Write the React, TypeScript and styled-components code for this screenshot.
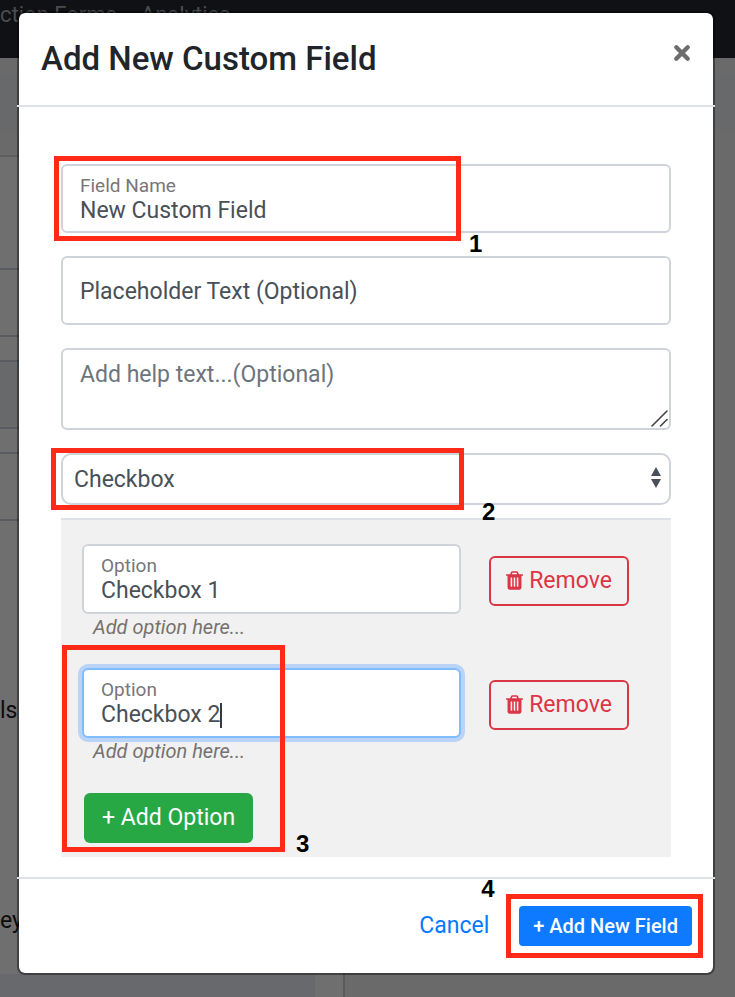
import React, { useState } from "react";
import styled, { createGlobalStyle, css } from "styled-components";

const GlobalStyle = createGlobalStyle`
  *, *::before, *::after { box-sizing: border-box; }
  body {
    margin: 0;
    background: #6a6a6a;
    color: #212529;
    font-family: Roboto, "Liberation Sans", sans-serif;
  }
  button, input, select, textarea { font: inherit; }
`;

/* ---------- page behind the dialog ---------- */

const Screen = styled.div`
  position: relative;
  min-height: 100vh;
  overflow: hidden;
`;

const Backdrop = styled.div`
  position: absolute;
  inset: 0;
  display: flex;
  flex-direction: column;
  overflow: hidden;
`;

const NavBar = styled.nav`
  flex: none;
  display: flex;
  gap: 24px;
  height: 58px;
  padding-top: 2px;
  background: #101115;
  color: #4b4c4f;
  font-size: 22px;
  line-height: 26px;
  white-space: nowrap;
`;

const SubBar = styled.div`
  flex: none;
  height: 56px;
  margin: 17px 0 24px;
  background: #67696b;
`;

const Columns = styled.div`
  flex: 1;
  display: flex;
`;

const Column = styled.div`
  width: 345px;
  display: flex;
  flex-direction: column;
  border-top: 2px solid #5f5f60;
  border-right: 2px solid #5a5a5a;
  background: #6f6f6f;
  color: #0c0c0d;
  font-size: 23px;
  line-height: 30px;
`;

const Band = styled.div<{ $height: number; $shade?: boolean }>`
  flex: none;
  height: ${(p) => p.$height}px;
  border-bottom: 2px solid #585c60;
  background: ${(p) => (p.$shade ? "#67696b" : "transparent")};
`;

const PageText = styled.p<{ $top: number }>`
  margin: ${(p) => p.$top}px 0 0;
`;

const BottomBand = styled.div`
  flex: 1;
  margin: 38px 28px 0 0;
  background: #68696c;
`;

/* ---------- dialog ---------- */

const Dialog = styled.div`
  position: relative;
  margin: 11px 20px 22px 17px;
  border: 2px solid rgba(0, 0, 0, 0.4);
  border-radius: 8px;
  background: #fff;
  background-clip: padding-box;
`;

const Header = styled.header`
  display: flex;
  justify-content: space-between;
  align-items: flex-start;
  margin: 0 -2px;
  padding: 24px 24px 24px;
  border-bottom: 2px solid #dee2e6;
`;

const Title = styled.h1`
  margin: 0;
  font-size: 33px;
  line-height: 44px;
  font-weight: 500;
`;

const CloseButton = styled.button`
  display: flex;
  margin: 7px 0 0;
  padding: 0;
  border: 0;
  background: none;
  color: #6d6d6d;
`;

const Body = styled.div`
  display: flex;
  flex-direction: column;
  gap: 23px;
  padding: 57px 42px 20px;
`;

const Anchor = styled.div`
  position: relative;
  min-width: 0;
`;

const FieldBox = styled.div<{ $focus?: boolean; $tall?: boolean; $single?: boolean }>`
  display: flex;
  flex-direction: column;
  justify-content: center;
  height: ${(p) => (p.$tall ? 70 : 69)}px;
  padding: ${(p) => (p.$single ? 3 : 0)}px 17px 0;
  border: 2px solid #ced4da;
  border-radius: 6px;
  background: #fff;
  ${(p) =>
    p.$focus &&
    css`
      border-color: #80bdff;
      box-shadow: 0 0 0 4px #b9d4f6;
    `}
`;

const FieldLabel = styled.label`
  color: #777;
  font-size: 19px;
  line-height: 24px;
`;

const InputLine = styled.div`
  display: flex;
  align-items: center;
`;

const TextInput = styled.input<{ $fit?: boolean }>`
  width: 100%;
  padding: 0;
  border: 0;
  outline: 0;
  background: none;
  color: #495057;
  font-size: 23px;
  line-height: 26px;
  height: 26px;
  ${(p) =>
    p.$fit &&
    css`
      width: auto;
      field-sizing: content;
    `}
  &::placeholder {
    color: #495057;
    opacity: 1;
  }
`;

const Caret = styled.span`
  width: 2px;
  height: 25px;
  background: #343a40;
`;

const HelpText = styled.textarea`
  display: block;
  width: 100%;
  height: 82px;
  padding: 10px 17px;
  border: 2px solid #ced4da;
  border-radius: 6px;
  outline: 0;
  resize: none;
  color: #495057;
  font-size: 23px;
  line-height: 30px;
  &::placeholder {
    color: #6c757d;
    opacity: 1;
  }
`;

const Grip = styled.svg`
  position: absolute;
  right: 3px;
  bottom: 3px;
`;

const TypeSelect = styled.select`
  display: block;
  width: 100%;
  height: 52px;
  padding: 0 40px 0 11px;
  appearance: none;
  border: 2px solid #ced4da;
  border-radius: 10px;
  outline: 0;
  background: #fff;
  color: #495057;
  font-size: 23px;
`;

const SelectArrows = styled.svg`
  position: absolute;
  right: 10px;
  top: 14px;
  pointer-events: none;
`;

const OptionsPanel = styled.section`
  margin-top: -10px;
  padding: 24px 42px 14px 21px;
  border-top: 2px solid #dee2e6;
  background: #f1f1f1;
`;

const OptionRow = styled.div`
  display: flex;
  align-items: flex-start;
  gap: 28px;
  height: 124px;
`;

const OptionField = styled.div`
  flex: 1;
  min-width: 0;
`;

const Hint = styled.p`
  margin: 0 0 0 11px;
  color: #76716f;
  font-size: 20px;
  line-height: 26px;
  font-style: italic;
`;

const RemoveButton = styled.button`
  flex: none;
  display: flex;
  align-items: center;
  justify-content: center;
  gap: 6px;
  width: 140px;
  height: 50px;
  margin-top: 12px;
  padding: 0 0 2px;
  border: 2px solid #dc3545;
  border-radius: 6px;
  background: none;
  color: #dc3545;
  font-size: 23px;
`;

const AddOptionButton = styled.button`
  height: 50px;
  margin: 1px 0 0 2px;
  padding: 0 18px 2px;
  border: 0;
  border-radius: 6px;
  background: #28a745;
  color: #fff;
  font-size: 23px;
  white-space: nowrap;
`;

const Footer = styled.footer`
  display: flex;
  justify-content: flex-end;
  align-items: center;
  gap: 30px;
  margin: 0 -2px;
  padding: 27px 23px;
  border-top: 2px solid #dee2e6;
`;

const CancelButton = styled.button`
  padding: 0;
  border: 0;
  background: none;
  color: #007bff;
  font-size: 23px;
  line-height: 40px;
`;

const SubmitButton = styled.button`
  height: 40px;
  padding: 0 14px;
  border: 0;
  border-radius: 4px;
  background: #0d7aff;
  color: #fff;
  font-size: 20px;
  font-weight: 500;
  white-space: nowrap;
`;

/* ---------- step annotations drawn over the dialog ---------- */

type Box = { top: number; left: number; width: number; height: number };

const Highlight = styled.div<{ $box: Box }>`
  position: absolute;
  z-index: 1;
  top: ${(p) => p.$box.top}px;
  left: ${(p) => p.$box.left}px;
  width: ${(p) => p.$box.width}px;
  height: ${(p) => p.$box.height}px;
  border: 5px solid #ff2a17;
  pointer-events: none;
`;

const StepNumber = styled.span<{ $x: number; $y: number }>`
  position: absolute;
  left: ${(p) => p.$x}px;
  top: ${(p) => p.$y}px;
  color: #000;
  font: bold 24px/24px "Liberation Sans", sans-serif;
`;

function Step({ n, box, x, y }: { n: number; box: Box; x: number; y: number }) {
  return (
    <Highlight $box={box}>
      <StepNumber $x={x} $y={y}>{n}</StepNumber>
    </Highlight>
  );
}

const TrashIcon = () => (
  <svg width="17" height="19" viewBox="192 128 1408 1536" fill="currentColor" aria-hidden="true">
    <path d="M704 1376v-704q0-14-9-23t-23-9h-64q-14 0-23 9t-9 23v704q0 14 9 23t23 9h64q14 0 23-9t9-23zm256 0v-704q0-14-9-23t-23-9h-64q-14 0-23 9t-9 23v704q0 14 9 23t23 9h64q14 0 23-9t9-23zm256 0v-704q0-14-9-23t-23-9h-64q-14 0-23 9t-9 23v704q0 14 9 23t23 9h64q14 0 23-9t9-23zm-544-992h448l-48-117q-7-9-17-11h-317q-10 2-17 11zm928 32v64q0 14-9 23t-23 9h-96v948q0 83-47 143.500t-113 60.500h-832q-66 0-113-58.500t-47-141.500v-952h-96q-14 0-23-9t-9-23v-64q0-14 9-23t23-9h309l70-167q15-37 54-63t79-26h320q40 0 79 26t54 63l70 167h309q14 0 23 9t9 23z" />
  </svg>
);

function Option({ id, initial, focus }: { id: string; initial: string; focus?: boolean }) {
  const [value, setValue] = useState(initial);
  return (
    <OptionRow>
      <OptionField>
        <FieldBox $tall $focus={focus}>
          <FieldLabel htmlFor={id}>Option</FieldLabel>
          <InputLine>
            <TextInput id={id} $fit={focus} value={value} onChange={(e) => setValue(e.target.value)} />
            {focus && <Caret />}
          </InputLine>
        </FieldBox>
        <Hint>Add option here...</Hint>
      </OptionField>
      <RemoveButton type="button">
        <TrashIcon />
        Remove
      </RemoveButton>
    </OptionRow>
  );
}

export default function App() {
  const [name, setName] = useState("New Custom Field");
  return (
    <Screen>
      <GlobalStyle />
      <Backdrop aria-hidden="true">
        <NavBar>
          <span>ction Forms</span>
          <span>Analytics</span>
        </NavBar>
        <SubBar />
        <Columns>
          <Column>
            <Band $height={113} />
            <Band $height={67} />
            <Band $height={25} />
            <Band $height={67} $shade />
            <Band $height={25} />
            <Band $height={67} />
            <PageText $top={175}>ls.</PageText>
            <PageText $top={180}>ey</PageText>
            <BottomBand />
          </Column>
        </Columns>
      </Backdrop>

      <Dialog role="dialog" aria-labelledby="dialog-title">
        <Header>
          <Title id="dialog-title">Add New Custom Field</Title>
          <CloseButton type="button" aria-label="Close">
            <svg width="18" height="18" viewBox="0 0 18 18" fill="none" stroke="currentColor" strokeWidth="4.4" strokeLinecap="round">
              <path d="M3.300 3.300L14.700 14.700M14.700 3.300L3.300 14.700" />
            </svg>
          </CloseButton>
        </Header>

        <Body>
          <Anchor>
            <FieldBox>
              <FieldLabel htmlFor="field-name">Field Name</FieldLabel>
              <TextInput id="field-name" value={name} onChange={(e) => setName(e.target.value)} />
            </FieldBox>
            <Step n={1} box={{ top: -8, left: -7, width: 407, height: 85 }} x={410} y={71} />
          </Anchor>

          <FieldBox $single>
            <TextInput aria-label="Placeholder text" placeholder="Placeholder Text (Optional)" />
          </FieldBox>

          <Anchor>
            <HelpText aria-label="Help text" placeholder="Add help text...(Optional)" />
            <Grip width="17" height="17" viewBox="0 0 17 17" stroke="#444" strokeWidth="1.6" strokeLinecap="round">
              <path d="M1 16L16 1M9.500 16L16 9.500" />
            </Grip>
          </Anchor>

          <Anchor>
            <TypeSelect aria-label="Field type" defaultValue="Checkbox">
              <option>Checkbox</option>
            </TypeSelect>
            <SelectArrows width="10" height="21" viewBox="0 0 10 21" fill="#495057">
              <path d="M5 0L10 9H0ZM5 21L0 12H10Z" />
            </SelectArrows>
            <Step n={2} box={{ top: -5, left: -10, width: 413, height: 62 }} x={426} y={47} />
          </Anchor>

          <OptionsPanel>
            <Option id="option-1" initial="Checkbox 1" />
            <Anchor>
              <Option id="option-2" initial="Checkbox 2" focus />
              <AddOptionButton type="button">+ Add Option</AddOptionButton>
              <Step n={3} box={{ top: -23, left: -20, width: 223, height: 207 }} x={229} y={182} />
            </Anchor>
          </OptionsPanel>
        </Body>

        <Footer>
          <CancelButton type="button">Cancel</CancelButton>
          <Anchor>
            <SubmitButton type="button">+ Add New Field</SubmitButton>
            <Step n={4} box={{ top: -12, left: -13, width: 197, height: 64 }} x={-30} y={-22} />
          </Anchor>
        </Footer>
      </Dialog>
    </Screen>
  );
}
